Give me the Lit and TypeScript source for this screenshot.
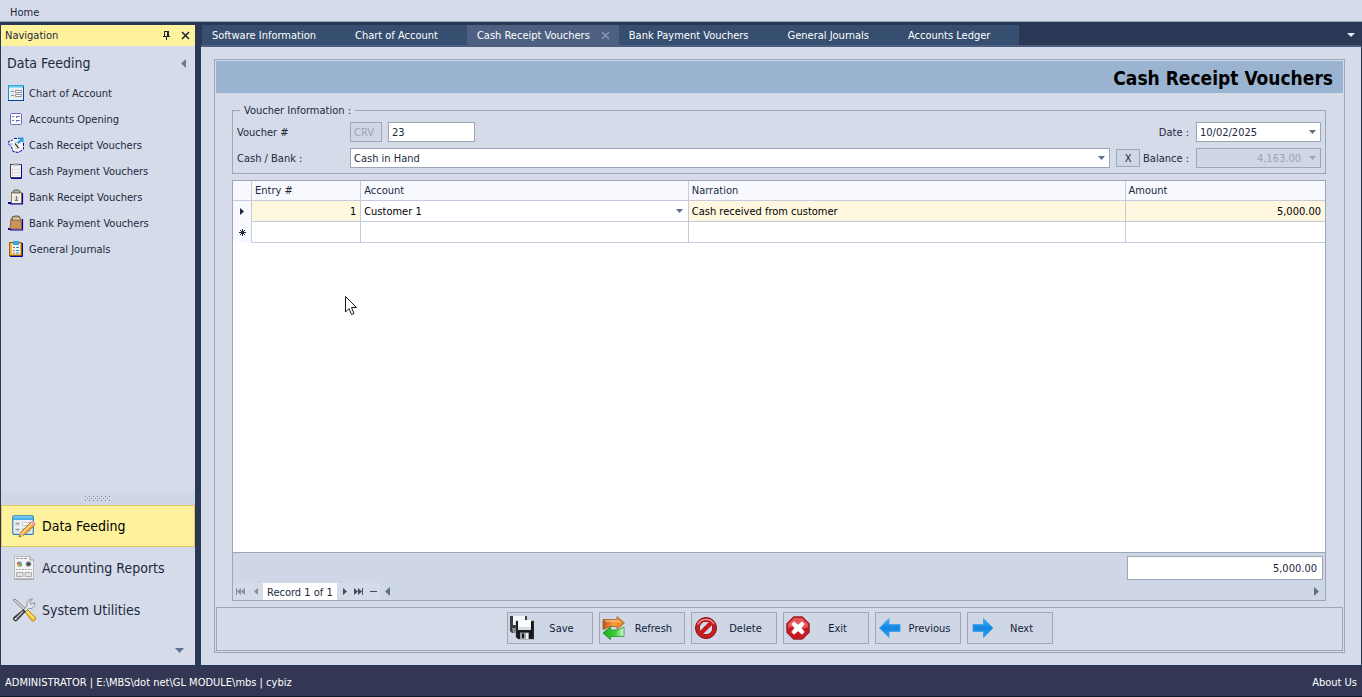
import { LitElement, html, svg, css, TemplateResult } from "lit";
import { customElement, state } from "lit/decorators.js";
import { classMap } from "lit/directives/class-map.js";

const icon16 = (body: TemplateResult) => html`<svg width="16" height="16" viewBox="0 0 16 16" aria-hidden="true">${body}</svg>`;
const icon24 = (body: TemplateResult) => html`<svg width="24" height="24" viewBox="0 0 24 24" aria-hidden="true">${body}</svg>`;

const arrowDown = html`<svg class="arrow" width="7" height="4" viewBox="0 0 7 4" aria-hidden="true"><path d="M0 0H7L3.5 4Z" fill="currentColor"/></svg>`;

const smallIcons = {
  chart: icon16(svg`
    <rect x=".5" y=".5" width="15" height="15" fill="#e8f3f8" stroke="#1496d6"/>
    <path d="M0 15.5H16M15.5 2V16" stroke="#0b3fae"/><path d="M1 1.5H15" stroke="#5fc3ee" stroke-width="2"/>
    <path d="M2 4H14V13H2Z" fill="#eceae4"/>
    <path d="M3 6.500H6M3 10.500H6" stroke="#8b94a0"/><path d="M7.500 5.500H13.500V7.500H7.500ZM7.500 9.500H13.500V11.500H7.500Z" fill="#fff" stroke="#8b94a0"/>`),
  opening: icon16(svg`
    <rect x="2.500" y="2.500" width="11" height="11" rx="1" fill="#fff" stroke="#6a68c4"/>
    <path d="M4 5.500H6M4 9.500H6M8 5.500H12M8 9.500H12M8.500 5V7M8.500 9V11" stroke="#6b6fb5"/>`),
  cashReceipt: icon16(svg`
    <path d="M5 2L11 1L15 4V12L10 15L5 14L3 9L1 7L1 4Z" fill="#f6f5f2"/>
    <path d="M6 1.500H11M15.500 6V12L13 14L10 15.500L5 14.500L3.500 10L.5 7V4.500L5 3" fill="none" stroke="#0707a8" stroke-dasharray="3 1"/>
    <path d="M6 5L12 5M7 12L12 11" stroke="#c9c9c4"/><path d="M7 6.500L10.500 11" stroke="#444" stroke-width="1.300"/>
    <path d="M10 .5H15.500V6L13.500 4.500L10.500 7L9 5L12 3Z" fill="#2b9be2"/><path d="M1 5L5 7L3 9Z" fill="#9fd4f4"/>`),
  cashPayment: icon16(svg`
    <rect x="2.500" y="1.500" width="11" height="13" fill="#f3f1f1" stroke="#404060"/>
    <path d="M13.500 2V15.500H3" fill="none" stroke="#0505a5"/><path d="M5 1.500H11" stroke="#999" stroke-width="2"/>
    <path d="M4.500 5V13" stroke="#f1c9c4"/><path d="M6 6.500H12M6 9.500H12M6 12.500H12" stroke="#ddd"/>`),
  bankReceipt: icon16(svg`
    <path d="M0 13H3V15H0Z" fill="#0505a5"/><rect x="3.500" y="3.500" width="10" height="11" fill="#f4f2ee" stroke="#9b7442"/>
    <path d="M2 15H14.500V4" fill="none" stroke="#0505a5" stroke-width="1.200"/>
    <path d="M5 4V2L7 1H10L12 2V4Z" fill="#b8b3a6" stroke="#615c50"/>
    <path d="M6 7H11V12H6Z" fill="#dcdcdc"/><path d="M8.500 7V11M7 11.500H10" stroke="#777"/>`),
  bankPayment: icon16(svg`
    <path d="M0 13H4V15H0Z" fill="#0505a5"/><path d="M3 4H13L14 14H2Z" fill="#c9935c" stroke="#8f6236"/>
    <path d="M2 15H14.500V4" fill="none" stroke="#0505a5" stroke-width="1.200"/>
    <path d="M4 5V2L7 1H10L12 2V5Z" fill="#b4a887" stroke="#6f5b34"/><path d="M5 4H12" stroke="#ece4cc"/>`),
  journals: icon16(svg`
    <rect x="1.500" y="1.500" width="12" height="13" fill="#f4b436" stroke="#93600d"/>
    <path d="M14.500 2V15.500H2" fill="none" stroke="#0505a5"/><path d="M4 3H12V13H4Z" fill="#e5f3fb"/>
    <path d="M5 0H11V4H5Z" fill="#35a5e5"/><path d="M5 6.500H7M5 9.500H7M5 12H7" stroke="#e0584d"/><path d="M8 6.500H11M8 9.500H11M8 12H11" stroke="#2c90d3"/>`),
};

const groupIcons = {
  feeding: icon24(svg`
    <rect x=".8" y="1.800" width="20.500" height="18.500" rx="1" fill="#eef1f2" stroke="#2a82b4" stroke-width="1.200"/>
    <path d="M1 2H21V6H1Z" fill="#48b0e8"/><path d="M2 3H20" stroke="#9fdcfa"/>
    <path d="M3 8H8V12H3ZM3 14H8V18H3Z" fill="#d5d9db"/><path d="M4 9.500H7M4 15.500H7" stroke="#8d9498"/>
    <path d="M10.500 8.500H18.500V11.500H10.500ZM10.500 14.500H18.500V17.500H10.500Z" fill="#fff" stroke="#c3c9cd"/>
    <path d="M7 23L9 18L19 8L23 11L12 21Z" fill="#f6a839" stroke="#9b632a" stroke-width=".8"/>
    <path d="M10 19.500L20 9.500" stroke="#ffdc8c" stroke-width="1.500"/><path d="M18.500 8.500L20.500 7L24 9.500L22.500 12Z" fill="#e9a0b2"/><path d="M7 23L8.500 19L11 21.500Z" fill="#f0d3a5"/><path d="M7 23L7.800 21L9 22Z" fill="#333"/>`),
  reports: icon24(svg`
    <path d="M2.500 .5H18L21.500 4V22.500H2.500Z" fill="#f5f5f5" stroke="#b8bbbe"/><path d="M18 .5V4H21.500" fill="#ddd" stroke="#999"/>
    <path d="M2 23.500H22" stroke="#a5aaae"/><path d="M4 2.500H15" stroke="#999" stroke-dasharray="3 1"/>
    <circle cx="7.500" cy="8" r="2.600" fill="#5aa5dc"/><path d="M7.500 8V5.400A2.600 2.600 0 0 0 4.900 8Z" fill="#e9564a"/><path d="M7.500 8H4.900A2.600 2.600 0 0 0 7.500 10.600Z" fill="#f3b83a"/><path d="M7.500 8V10.600A2.600 2.600 0 0 0 10.100 8Z" fill="#66b356"/>
    <circle cx="16.500" cy="8" r="2.800" fill="#8a8a8a"/><circle cx="16.500" cy="8" r="1.500" fill="#3b3b3b"/>
    <path d="M4 13.500H20" stroke="#a6a6a6" stroke-dasharray="2 1"/><path d="M4.500 16.500H11V20.500H4.500ZM13 16.500H19.500V20.500H13Z" fill="#e2e2e2" stroke="#aaa"/>`),
  utilities: icon24(svg`
    <path d="M1 2L3 1L14 11L12.500 13Z" fill="#d3d6d9" stroke="#6d7378" stroke-width=".8"/>
    <path d="M12 12.500L14.500 10.500L23.500 19.500C24 22 22 23.500 20 23Z" fill="#f6bf22" stroke="#a67b10" stroke-width=".8"/><path d="M14.500 13L22 20.500" stroke="#ffe680" stroke-width="1.400"/>
    <path d="M15 8.500C14 4.500 17 .5 20.500 1.200L17.500 4L19 6.500L22.500 4.500C23.500 8.500 20 11.500 16.500 10.500L13 14L11 12Z" fill="#e4e7e9" stroke="#777d82" stroke-width=".8"/>
    <path d="M11.500 11.500L13.500 13.500L5 22.500C3 24 .5 22 1.500 19.500Z" fill="#3b3e42" stroke="#222" stroke-width=".6"/><path d="M11 13.500L4 20.500" stroke="#c4c8cb" stroke-width="1.200"/><circle cx="3.600" cy="21" r="1" fill="#eee"/>`),
};

const actionIcons = {
  save: icon24(svg`
    <path d="M0 0H17V17H2L0 15Z" fill="#3a3e43"/><path d="M3 0H15V9H3Z" fill="#f4f6f8"/><path d="M2 12H8V17H3Z" fill="#8b9096"/>
    <path d="M6 5H24V23H8L6 21Z" fill="#17191c" stroke="#555" stroke-width=".5"/><path d="M8 4H21V14H8Z" fill="#fafbfd"/><path d="M8 11H21V14H8Z" fill="#d8dde3"/>
    <path d="M10 16.500H19V23H10Z" fill="#9ba1a7"/><path d="M12 17.500H14V22H12Z" fill="#15171a"/><path d="M16 17H18V23H16Z" fill="#eee"/>`),
  refresh: icon24(svg`
    <defs><linearGradient id="og" x1="0" y1="0" x2="1" y2="0"><stop offset="0" stop-color="#b95318"/><stop offset=".5" stop-color="#ff9d3e"/><stop offset="1" stop-color="#d8781c"/></linearGradient>
    <linearGradient id="gg" x1="0" y1="0" x2="1" y2="0"><stop offset="0" stop-color="#1da622"/><stop offset=".6" stop-color="#3bd23c"/><stop offset="1" stop-color="#e0f6de"/></linearGradient></defs>
    <path d="M1 3.500H15V.5L22.500 7L15 13.500V10.500H8L1 13.500Z" fill="url(#og)" stroke="#9b5a1e" stroke-width=".7"/><path d="M3 5H16L19 7" fill="none" stroke="#ffd5a0"/>
    <path d="M22 11V20.500H8.500V23.800L1 17L8.500 10.500V14H16Z" fill="url(#gg)" stroke="#218526" stroke-width=".7"/>`),
  delete: icon24(svg`
    <circle cx="12" cy="12" r="10.500" fill="#d01c1c" stroke="#7d1414"/><circle cx="12" cy="12" r="6.800" fill="#d3d8e4" stroke="#8a1616"/>
    <path d="M15.500 5.500L18.500 8.500L8.500 18.500L5.500 15.500Z" fill="#c81818"/><path d="M4 8.500C6 2.800 16 1 20 8" fill="none" stroke="#f28c8c" stroke-width="1.500"/>`),
  exit: icon24(svg`
    <path d="M7.500 .8H16.500L23.200 7.500V16.500L16.500 23.200H7.500L.8 16.500V7.500Z" fill="#c91820" stroke="#8a2a2d"/><path d="M8 2H16L22 8V11C17 14 7 9 2 12V8Z" fill="#e85358"/>
    <path d="M8 5.500L12 9L16 5.500L18.500 8L15.500 12L18.500 16L16 18.500L12 15L8 18.500L5.500 16L8.500 12L5.500 8Z" fill="#fff" stroke="#ddd" stroke-width=".5"/>`),
  previous: icon24(svg`
    <defs><linearGradient id="bp" x1="0" y1="0" x2="0" y2="1"><stop offset="0" stop-color="#28c4fa"/><stop offset=".5" stop-color="#1483e0"/><stop offset="1" stop-color="#20a8f6"/></linearGradient></defs>
    <path d="M1.500 12L11 2.500V8.500H22V15.500H11V21.500Z" fill="url(#bp)" stroke="#3a9be6" stroke-width=".8"/>`),
  next: icon24(svg`
    <defs><linearGradient id="bn" x1="0" y1="0" x2="0" y2="1"><stop offset="0" stop-color="#28c4fa"/><stop offset=".5" stop-color="#1483e0"/><stop offset="1" stop-color="#20a8f6"/></linearGradient></defs>
    <path d="M23 12L13.500 2.500V8.500H3V15.500H13.500V21.500Z" fill="url(#bn)" stroke="#3a9be6" stroke-width=".8"/>`),
};

const base = css`
  :host { font-family: "DejaVu Sans Condensed", "DejaVu Sans", sans-serif; font-size: 11px; line-height: 17px; color: #1b293e; }
  * { box-sizing: border-box; }
  button, input, select { font: inherit; color: inherit; margin: 0; padding: 0; border: 0; border-radius: 0; background: none; }
  button:focus-visible, a:focus-visible { outline: 1px dotted #1b293e; }
  svg { display: block; flex: none; }
`;

@customElement("nav-panel")
export class NavPanel extends LitElement {
  @state() private group = "Data Feeding";
  private links = [
    ["Chart of Account", smallIcons.chart], ["Accounts Opening", smallIcons.opening],
    ["Cash Receipt Vouchers", smallIcons.cashReceipt], ["Cash Payment Vouchers", smallIcons.cashPayment],
    ["Bank Receipt Vouchers", smallIcons.bankReceipt], ["Bank Payment Vouchers", smallIcons.bankPayment],
    ["General Journals", smallIcons.journals],
  ] as [string, TemplateResult][];
  private groups = [
    ["Data Feeding", groupIcons.feeding], ["Accounting Reports", groupIcons.reports], ["System Utilities", groupIcons.utilities],
  ] as [string, TemplateResult][];

  static styles = [base, css`
    :host { display: flex; flex-direction: column; background: #d6dbe9; }
    .head { display: flex; align-items: center; gap: 10px; height: 21px; padding: 0 5px 0 4px; background: #fff29d; }
    .head span { flex: 1; }
    .title { display: flex; align-items: center; justify-content: space-between; height: 34px; padding: 0 9px 0 6px; margin: 0; font-size: 14px; line-height: 16px; font-weight: 400; }
    .links { flex: 1; list-style: none; margin: 0; padding: 0 7px; }
    .links a { display: flex; align-items: center; gap: 5px; height: 26px; color: inherit; text-decoration: none; }
    .splitter { display: flex; align-items: center; justify-content: center; height: 12px; background: #cfd6e5; }
    .groups button { display: flex; align-items: center; gap: 6px; width: 100%; height: 42px; padding: 0 10px; border: 1px solid transparent; font-size: 14px; line-height: 16px; text-align: left; }
    .groups button.on { background: #fff29d; border-color: #e5c365; color: #000; }
    .more { display: flex; align-items: center; justify-content: flex-end; height: 34px; padding: 4px 11px 0; }
  `];

  render() {
    return html`
      <div class="head"><span>Navigation</span>
        <button aria-label="Pin"><svg width="9" height="10" viewBox="0 0 9 10"><path d="M2 .5H7M2.500 0V5M5.500 0V5M6.500 0V5M1 5.500H8M4.500 6V9" fill="none" stroke="#1b293e"/></svg></button>
        <button aria-label="Close"><svg width="9" height="9" viewBox="0 0 9 9"><path d="M1 1L8 8M8 1L1 8" stroke="#1b293e" stroke-width="1.600"/></svg></button>
      </div>
      <h2 class="title">${this.group}<svg width="5" height="9" viewBox="0 0 5 9"><path d="M5 0V9L0 4.500Z" fill="#6f7886"/></svg></h2>
      <ul class="links">${this.links.map(([t, i]) => html`<li><a href="#">${i}${t}</a></li>`)}</ul>
      <div class="splitter"><svg width="26" height="6" viewBox="0 0 26 6">
        ${[0, 4, 8, 12, 16, 20, 24].map(x => svg`<path d="M${x} 0h1v1h-1zM${x + 2} 2h1v1h-1zM${x} 4h1v1h-1z" fill="#7b889b"/>`)}</svg></div>
      <div class="groups">${this.groups.map(([t, i]) => html`
        <button class=${classMap({ on: t === this.group })} @click=${() => (this.group = t)}>${i}${t}</button>`)}</div>
      <div class="more"><svg width="9" height="5" viewBox="0 0 9 5"><path d="M0 0H9L4.500 5Z" fill="#5f7391"/></svg></div>`;
  }
}

@customElement("voucher-form")
export class VoucherForm extends LitElement {
  private rows = [{ entry: "1", account: "Customer 1", narration: "Cash received from customer", amount: "5,000.00" }];

  static styles = [base, css`
    :host { display: flex; flex-direction: column; border: 1px solid #9ba7b7; padding: 1px; background: #d6dbe9; }
    h1 { margin: 0; height: 32px; padding: 0 10px; background: #9ab3d0; color: #000; font-size: 19px; line-height: 34px; text-align: right; }
    .body { flex: 1; display: flex; flex-direction: column; gap: 6px; padding: 9px 17px 6px 16px; min-height: 0; }
    fieldset { margin: 0; padding: 3px 4px 5px; border: 1px solid #9ba7b7; min-width: 0; }
    legend { margin-left: 3px; padding: 0 4px; }
    .fields { display: flex; flex-direction: column; gap: 6px; }
    .row { display: flex; align-items: center; height: 20px; }
    .row > label:first-child { width: 113px; }
    .row .right { margin-left: auto; padding-right: 7px; }
    .box { height: 20px; border: 1px solid #9ba7b7; background: #fff; padding: 0 3px; }
    .code { width: 32px; margin-right: 6px; }
    .number { width: 87px; }
    .combo { display: grid; grid-template-columns: minmax(0, 1fr) 16px; align-items: center; padding: 0; }
    .combo > input { grid-area: 1 / 1; height: 18px; padding: 0 3px; min-width: 0; }
    .combo > select { grid-area: 1 / 1 / 2 / 3; height: 18px; padding: 0 3px; appearance: none; outline: 0; }
    .combo > .arrow { grid-area: 1 / 2; pointer-events: none; color: #5d6f8c; justify-self: center; }
    .short { width: 125px; }
    .wide { flex: 1; }
    .off { background: #cfd6e5; color: #9aa4b6; }
    .off > .arrow { color: #9ba7b7; }
    .off input { text-align: right; }
    .clear { width: 24px; height: 18px; margin: 0 3px 0 6px; border: 1px solid #9ba7b7; background: #cfd6e5; }
    .sheet { flex: 1; display: flex; flex-direction: column; border: 1px solid #9ba7b7; min-height: 0; }
    .lines { flex: 1; background: #fff; min-height: 0; }
    table { width: 100%; table-layout: fixed; border-collapse: separate; border-spacing: 0; }
    th, td { height: 21px; padding: 0 4px 0 3px; border: solid #c7c9dc; border-width: 0 1px 1px 0; font-weight: 400; text-align: left; }
    thead th { height: 20px; background: #f8f9fe; }
    th:last-child, td:last-child { border-right: 0; }
    .mark { background: #f8f9fe; padding: 0 6px; }
    tbody .mark { border-bottom-color: #f8f9fe; }
    tbody td { color: #000; }
    .current td { background: #fff8e1; }
    .current .edit { background: #fff; padding: 0; }
    .current .edit .combo > select { height: 20px; }
    .amount { text-align: right; }
    .c-mark { width: 19px; } .c-entry { width: 10%; } .c-account { width: 30%; } .c-narration { width: 40%; }
    .foot { border-top: 1px solid #9ba7b7; background: #cfd6e5; }
    .total { display: flex; justify-content: flex-end; padding: 3px 2px; }
    .total output { width: 18%; height: 24px; padding: 0 5px; border: 1px solid #9ba7b7; background: #fff; text-align: right; line-height: 24px; }
    .pager { display: flex; align-items: center; height: 17px; padding-right: 6px; color: #5d6f8c; }
    .pager .steps { display: flex; align-items: center; height: 17px; background: #d6dbe9; color: #3f4d63; }
    .pager .prev { gap: 9px; padding: 0 5px 0 3px; color: #868e9b; }
    .pager .next { gap: 7px; padding: 0 3px 0 6px; }
    .pager .now { padding: 0 4px; background: #fff; color: #1b293e; height: 17px; line-height: 19px; }
    .pager .to-left { margin-left: 5px; }
    .pager .to-right { margin-left: auto; }
    .actions { display: flex; align-items: center; justify-content: center; gap: 6px; height: 44px; border: 1px solid #9ba7b7; padding-bottom: 2px; }
    .actions button { display: flex; align-items: center; width: 86px; height: 32px; padding: 0 2px; border: 1px solid #9ba7b7; background: #cfd6e5; color: #14203a; }
    .actions span { flex: 1; text-align: center; }
  `];

  private actions = [
    ["Save", actionIcons.save], ["Refresh", actionIcons.refresh], ["Delete", actionIcons.delete],
    ["Exit", actionIcons.exit], ["Previous", actionIcons.previous], ["Next", actionIcons.next],
  ] as [string, TemplateResult][];

  render() {
    return html`
      <h1>Cash Receipt Vouchers</h1>
      <div class="body">
        <fieldset><legend>Voucher Information :</legend>
          <div class="fields">
            <div class="row">
              <label for="no">Voucher #</label>
              <input class="box code off" value="CRV" aria-label="Voucher type" disabled>
              <input id="no" class="box number" value="23">
              <label class="right" for="date">Date :</label>
              <div class="box combo short"><input id="date" value="10/02/2025">${arrowDown}</div>
            </div>
            <div class="row">
              <label for="bank">Cash / Bank :</label>
              <div class="box combo wide"><select id="bank"><option>Cash in Hand</option></select>${arrowDown}</div>
              <button class="clear">X</button>
              <label class="right" for="balance">Balance :</label>
              <div class="box combo short off"><input id="balance" value="4,163.00" disabled>${arrowDown}</div>
            </div>
          </div>
        </fieldset>
        <div class="sheet">
          <div class="lines">
            <table>
              <colgroup><col class="c-mark"><col class="c-entry"><col class="c-account"><col class="c-narration"><col></colgroup>
              <thead><tr><th class="mark"></th><th>Entry #</th><th>Account</th><th>Narration</th><th>Amount</th></tr></thead>
              <tbody>
                ${this.rows.map(r => html`<tr class="current">
                  <th class="mark"><svg width="5" height="7" viewBox="0 0 5 7"><path d="M1 0V7L5 3.500Z" fill="#1b293e"/></svg></th>
                  <td class="amount">${r.entry}</td>
                  <td class="edit"><div class="combo"><select aria-label="Account"><option>${r.account}</option></select>${arrowDown}</div></td>
                  <td>${r.narration}</td><td class="amount">${r.amount}</td></tr>`)}
                <tr><th class="mark"><svg width="7" height="7" viewBox="0 0 7 7"><path d="M3.500 0V7M0 3.500H7M1 1L6 6M6 1L1 6" stroke="#1b293e"/></svg></th><td></td><td></td><td></td><td></td></tr>
              </tbody>
            </table>
          </div>
          <div class="foot">
            <div class="total"><output>5,000.00</output></div>
            <div class="pager">
              <div class="steps prev">
                <button aria-label="First record"><svg width="9" height="7" viewBox="0 0 9 7"><path d="M0 0H1V7H0ZM5 0V7L1 3.500ZM9 0V7L5 3.500Z" fill="currentColor"/></svg></button>
                <button aria-label="Previous record"><svg width="4" height="7" viewBox="0 0 4 7"><path d="M4 0V7L0 3.500Z" fill="currentColor"/></svg></button>
              </div>
              <span class="now">Record 1 of 1</span>
              <div class="steps next">
                <button aria-label="Next record"><svg width="4" height="7" viewBox="0 0 4 7"><path d="M0 0V7L4 3.500Z" fill="currentColor"/></svg></button>
                <button aria-label="Last record"><svg width="9" height="7" viewBox="0 0 9 7"><path d="M8 0H9V7H8ZM0 0V7L4 3.500ZM4 0V7L8 3.500Z" fill="currentColor"/></svg></button>
                <button aria-label="Remove record"><svg width="7" height="7" viewBox="0 0 7 7"><path d="M0 3H7V4H0Z" fill="currentColor"/></svg></button>
              </div>
              <svg class="to-left" width="5" height="9" viewBox="0 0 5 9"><path d="M5 0V9L0 4.500Z" fill="currentColor"/></svg>
              <svg class="to-right" width="5" height="9" viewBox="0 0 5 9"><path d="M0 0V9L5 4.500Z" fill="currentColor"/></svg>
            </div>
          </div>
        </div>
      </div>
      <div class="actions">${this.actions.map(([t, i]) => html`<button>${i}<span>${t}</span></button>`)}</div>`;
  }
}

@customElement("app-root")
export class AppRoot extends LitElement {
  @state() private tab = "Cash Receipt Vouchers";
  private tabs = ["Software Information", "Chart of Account", "Cash Receipt Vouchers", "Bank Payment Vouchers", "General Journals", "Accounts Ledger"];

  static styles = [base, css`
    :host { display: flex; flex-direction: column; position: relative; height: 100vh; background: #293955; }
    .menu { height: 22px; padding: 0 10px; border-bottom: 1px solid #9ba7b7; background: #d6dbe9; line-height: 26px; }
    .menu a, .status a { color: inherit; text-decoration: none; }
    .work { flex: 1; display: flex; gap: 6px; padding: 3px 1px 2px; min-height: 0; }
    nav-panel { width: 194px; flex: none; }
    .docs { flex: 1; display: flex; flex-direction: column; min-width: 0; }
    .tabs { display: flex; height: 22px; padding: 0 6px 0 1px; border-bottom: 2px solid #4d6082; align-items: center; }
    .tabs button { display: flex; align-items: center; height: 20px; padding: 0 29px 0 10px; background: #364e6f; color: #fff; white-space: nowrap; }
    .tabs button.on { padding-right: 9px; gap: 11px; background: #4d6082; }
    .tabs > svg { margin-left: auto; }
    .page { flex: 1; display: flex; flex-direction: column; padding: 12px 16px 12px 13px; background: #d6dbe9; min-height: 0; }
    voucher-form { flex: 1; min-height: 0; }
    .status { display: flex; justify-content: space-between; height: 30px; padding: 0 5px; border-bottom: 1px solid #101a26; background: #333753; color: #fff; line-height: 32px; }
    .pointer { position: absolute; left: 345px; top: 296px; pointer-events: none; }
  `];

  render() {
    return html`
      <div class="menu"><a href="#">Home</a></div>
      <div class="work">
        <nav-panel></nav-panel>
        <div class="docs">
          <div class="tabs">${this.tabs.map(t => html`<button class=${classMap({ on: t === this.tab })} @click=${() => (this.tab = t)}>${t}${t === this.tab
            ? html`<svg width="9" height="9" viewBox="0 0 9 9"><path d="M1 1L8 8M8 1L1 8" stroke="#8795ae" stroke-width="1.500"/></svg>` : ""}</button>`)}
            <svg width="8" height="4" viewBox="0 0 8 4"><path d="M0 0H8L4 4Z" fill="#e4e9f3"/></svg></div>
          <div class="page"><voucher-form></voucher-form></div>
        </div>
      </div>
      <div class="status"><span>ADMINISTRATOR | E:\\MBS\\dot net\\GL MODULE\\mbs | cybiz</span><a href="#">About Us</a></div>
      <svg class="pointer" width="12" height="19" viewBox="0 0 12 19"><path d="M.5 .5V16L4 12.500L6.500 18.500L9 17.500L6.500 11.500H11.500Z" fill="#fff" stroke="#1a1a1a"/></svg>`;
  }
}
